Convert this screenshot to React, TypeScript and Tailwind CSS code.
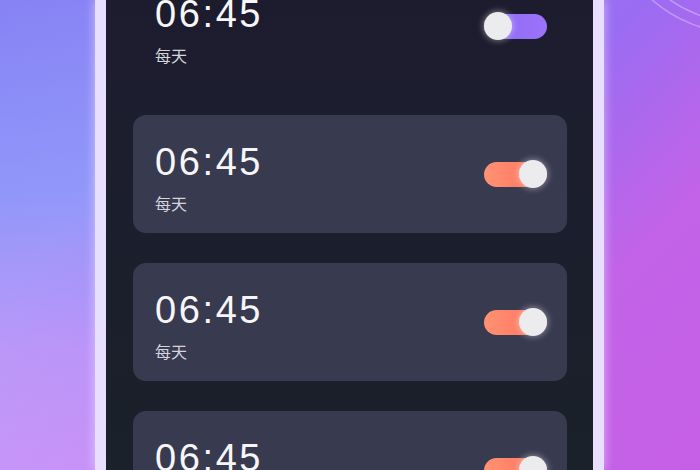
import React from 'react'

type Alarm = {
  time: string
  repeat: string
  on: boolean
  card: boolean
}

const alarms: Alarm[] = [
  { time: '06:45', repeat: '每天', on: false, card: false },
  { time: '06:45', repeat: '每天', on: true, card: true },
  { time: '06:45', repeat: '每天', on: true, card: true },
  { time: '06:45', repeat: '每天', on: true, card: true },
]

function Toggle({ on }: { on: boolean }) {
  return (
    <div
      className={`relative flex h-[25px] w-[63px] items-center rounded-full ${
        on
          ? 'justify-end bg-gradient-to-r from-[#ff9272] to-[#ff6c5e]'
          : 'justify-start bg-gradient-to-r from-[#8a6af6] to-[#9c72f8]'
      }`}
    >
      <span className="h-[28px] w-[28px] rounded-full bg-[#ececee] shadow-[0_0_6px_1px_rgba(255,255,255,0.4)]" />
    </div>
  )
}

function AlarmRow({ alarm }: { alarm: Alarm }) {
  return (
    <div
      className={`flex h-[118px] justify-between rounded-[13px] pl-[22px] pr-[20px] ${
        alarm.card ? 'bg-[#383a50]' : 'bg-transparent'
      }`}
    >
      <div className="flex flex-col pt-[28px]">
        <span className="text-[38px] leading-none font-normal tracking-[2.6px] text-[#f6f6f8] [font-family:'Liberation_Sans',Arial,sans-serif]">
          {alarm.time}
        </span>
        <span className="mt-[14px] text-[16px] leading-none text-[#d4d4dc] [font-family:'Noto_Sans_CJK_SC',sans-serif]">
          {alarm.repeat}
        </span>
      </div>
      <div className="self-center">
        <Toggle on={alarm.on} />
      </div>
    </div>
  )
}

export default function App() {
  return (
    <div className="relative h-[470px] w-[700px] overflow-hidden bg-[linear-gradient(135deg,#8682f5_0%,#8e88f6_25%,#9a6cf2_55%,#c263e8_76%,#c55fe6_100%)]">
      <div className="pointer-events-none absolute inset-y-0 left-0 w-[120px] bg-[linear-gradient(180deg,rgba(150,175,255,0)_0%,rgba(150,175,255,0.4)_40%,rgba(215,165,250,0.6)_75%,rgba(220,160,250,0.7)_100%)]" />
      <svg className="pointer-events-none absolute inset-0" width="700" height="470" fill="none">
        <circle cx="740" cy="-100" r="122" stroke="rgba(255,255,255,0.32)" strokeWidth="1.5" />
        <circle cx="740" cy="-100" r="133" stroke="rgba(255,255,255,0.32)" strokeWidth="1.5" />
      </svg>

      <div className="relative ml-[95px] flex h-full w-[509px] border-x-[11px] border-[#e8dfff] shadow-[0_0_10px_rgba(235,222,255,0.7)]">
        <div className="h-full w-full overflow-hidden bg-gradient-to-b from-[#1d1c2f] to-[#1a212a] pl-[27px] pr-[26px]">
          <div className="-mt-[33px] flex flex-col gap-[30px]">
            {alarms.map((alarm, i) => (
              <AlarmRow key={i} alarm={alarm} />
            ))}
          </div>
        </div>
      </div>
    </div>
  )
}
